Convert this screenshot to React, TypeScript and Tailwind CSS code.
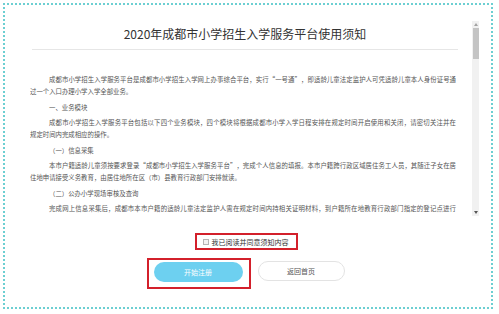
import React from "react";

const font = { fontFamily: '"Noto Sans CJK SC", "Noto Sans", sans-serif' };

function Full({ children, indent = true }: { children: React.ReactNode; indent?: boolean }) {
  return (
    <div className={`${indent ? "pl-[19px]" : ""} text-justify [text-align-last:justify]`}>{children}</div>
  );
}

function Line({ children, indent = false }: { children: React.ReactNode; indent?: boolean }) {
  return <div className={`${indent ? "pl-[19px]" : ""} whitespace-nowrap`}>{children}</div>;
}

export default function App() {
  return (
    <div className="w-[499px] h-[314px] bg-white p-[3px] overflow-hidden" style={font}>
      <div className="w-[490px] h-[306px] border-2 border-dotted border-[#6ccfd2] flex flex-col">
        <div className="pt-[15px] flex flex-row h-[211px] pl-[25px]">
          <div className="w-[430px] h-[196px] overflow-hidden">
            <div className="pt-[6px] text-[12px] leading-[16px] text-center text-[#333]">
              2020年成都市小学招生入学服务平台使用须知
            </div>
            <div className="mt-[7px] mx-[2px] border-t border-[#e6e6e6]" />
            <div className="mt-[24px] text-[6.4px] leading-[12px] text-[#555] pr-[4px]">
              <div className="mb-[3.5px]">
                <Full>
                  成都市小学招生入学服务平台是成都市小学招生入学网上办事综合平台，实行“一号通”，即适龄儿童法定监护人可凭适龄儿童本人身份证号通
                </Full>
                <Line>过一个入口办理小学入学全部业务。</Line>
              </div>
              <div className="mb-[3.5px]">
                <Line indent>一、业务模块</Line>
              </div>
              <div className="mb-[3.5px]">
                <Full>
                  成都市小学招生入学服务平台包括以下四个业务模块，四个模块将根据成都市小学入学日程安排在规定时间开启使用和关闭，请密切关注并在
                </Full>
                <Line>规定时间内完成相应的操作。</Line>
              </div>
              <div className="mb-[3.5px]">
                <Line indent>（一）信息采集</Line>
              </div>
              <div className="mb-[3.5px]">
                <Full>
                  本市户籍适龄儿童须按要求登录“成都市小学招生入学服务平台”，完成个人信息的填报。本市户籍跨行政区域居住务工人员，其随迁子女在居
                </Full>
                <Line>住地申请接受义务教育，由居住地所在区（市）县教育行政部门安排就读。</Line>
              </div>
              <div className="mb-[3.5px]">
                <Line indent>（二）公办小学现场审核及查询</Line>
              </div>
              <div className="mb-[3.5px]">
                <Full>
                  完成网上信息采集后，成都市本市户籍的适龄儿童法定监护人需在规定时间内持相关证明材料，到户籍所在地教育行政部门指定的登记点进行
                </Full>
              </div>
            </div>
          </div>
          <div className="ml-[12px] mt-[1px] w-[7px] h-[195px] bg-[#f1f1f1] flex flex-col items-center">
            <div className="mt-[2px] w-0 h-0 border-l-[2px] border-r-[2px] border-b-[3px] border-l-transparent border-r-transparent border-b-[#a3a3a3]" />
            <div className="mt-[2px] w-[6px] h-[31px] bg-[#c4c4c4]" />
            <div className="flex-1" />
            <div className="mb-[2px] w-0 h-0 border-l-[2px] border-r-[2px] border-t-[3px] border-l-transparent border-r-transparent border-t-[#555]" />
          </div>
        </div>
        <div className="mt-[17px] flex justify-center pr-[4px]">
          <div className="w-[103px] h-[17px] border-2 border-[#d3202b] flex items-center pl-[6px]">
            <div className="w-[6px] h-[6px] border border-[#b5b5b5] bg-[#f3f3f3]" />
            <span className="ml-[3px] text-[7px] leading-[10px] text-[#333] whitespace-nowrap">我已阅读并同意须知内容</span>
          </div>
        </div>
        <div className="mt-[8px] flex justify-center items-start gap-[7px] pr-[5px]">
          <div className="w-[104px] h-[31px] border-2 border-[#d3202b] pt-[2px] pl-[5px]">
            <div className="w-[89px] h-[20px] rounded-full bg-[#6dd0f0] flex items-center justify-center text-white text-[7px]">
              开始注册
            </div>
          </div>
          <div className="mt-[3px] w-[87px] h-[20px] rounded-full border border-[#e3e3e3] bg-white flex items-center justify-center text-[#555] text-[7px]">
            返回首页
          </div>
        </div>
      </div>
    </div>
  );
}
